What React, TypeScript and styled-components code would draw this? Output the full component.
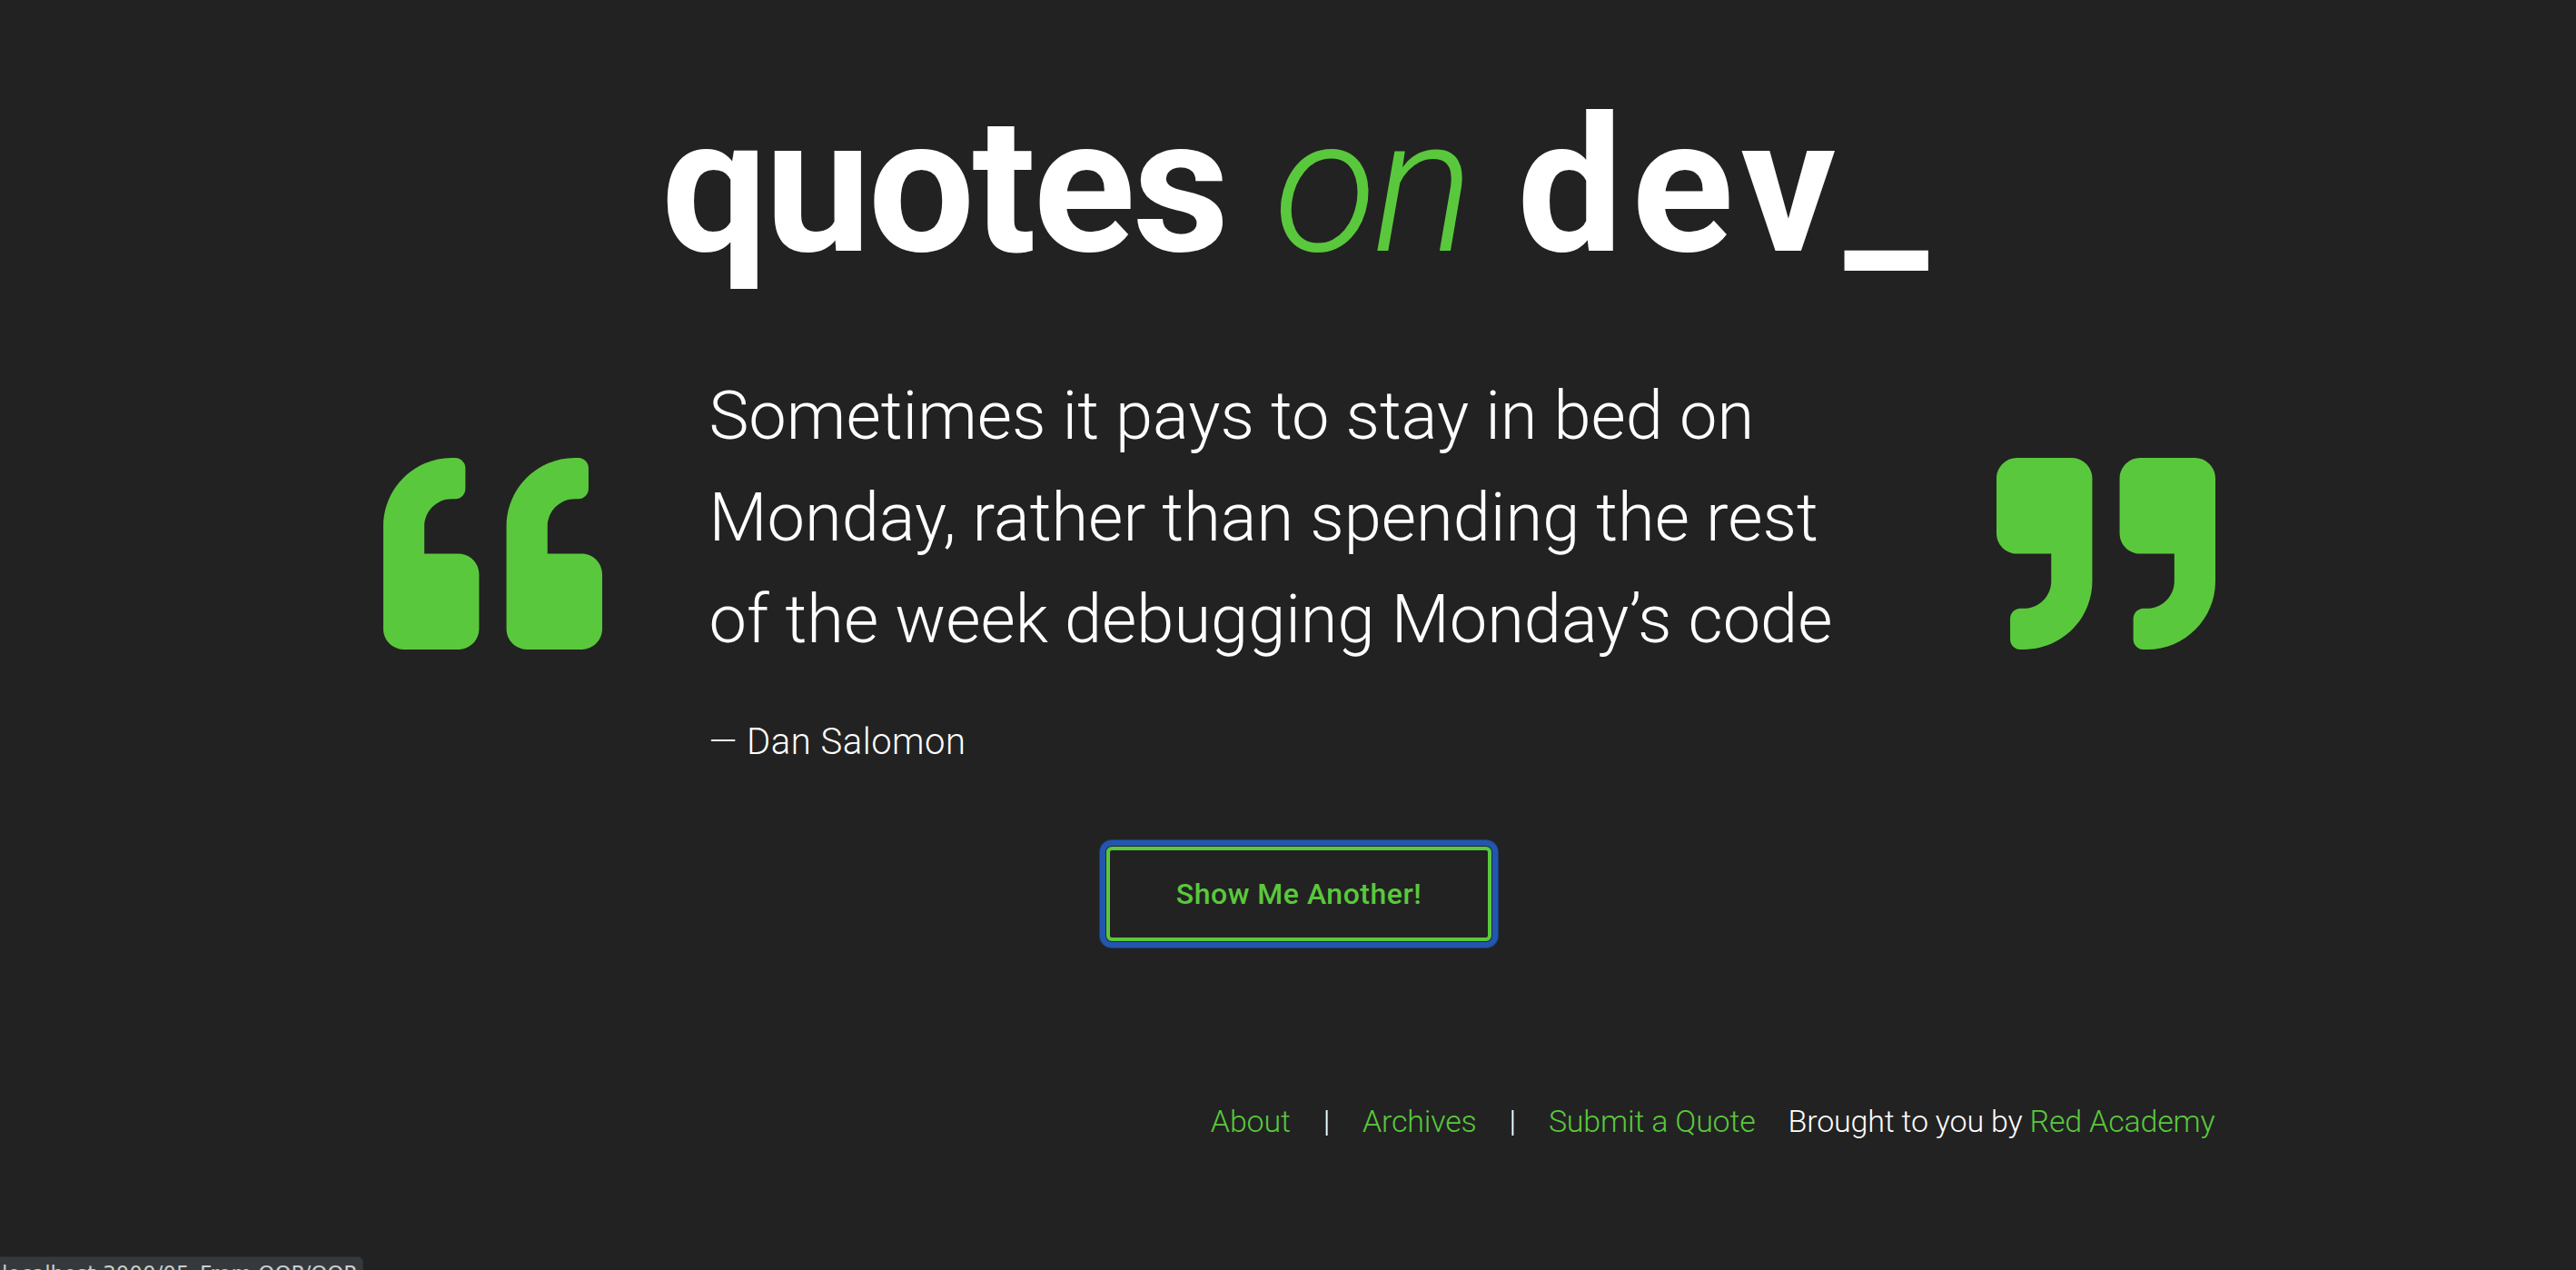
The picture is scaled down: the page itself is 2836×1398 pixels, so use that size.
import React from "react";
import styled, { createGlobalStyle } from "styled-components";

const GREEN = "#5ac83c";

const GlobalStyle = createGlobalStyle`
  html, body {
    margin: 0;
    padding: 0;
    background: #222222;
    height: 100%;
  }
  body {
    font-family: Roboto, "Noto Sans", sans-serif;
    color: #ffffff;
    overflow: hidden;
  }
  * { box-sizing: border-box; }
`;

const Page = styled.div`
  min-height: 100vh;
  padding: 101px 0 0 24px;
  display: flex;
  flex-direction: column;
  align-items: center;
`;

const Container = styled.main`
  width: 2017px;
  display: flex;
  flex-direction: column;
  align-items: center;
`;

const Logo = styled.h1`
  margin: 0;
  font-family: Roboto, sans-serif;
  font-size: 208px;
  line-height: 208px;
  font-weight: 700;
  color: #ffffff;
  white-space: nowrap;
`;

const LogoWord = styled.span<{ $spacing: number }>`
  letter-spacing: ${(p) => p.$spacing}px;
`;

const LogoOn = styled.span`
  font-weight: 300;
  font-style: italic;
  color: ${GREEN};
  letter-spacing: -4px;
`;

const QuoteRow = styled.section`
  align-self: stretch;
  display: flex;
  align-items: flex-start;
  margin-top: 93px;
`;

const QuoteIcon = styled.svg`
  flex: 0 0 241px;
  width: 241px;
  height: 241px;
  margin-top: 87px;
  fill: ${GREEN};
`;

const QuoteBody = styled.div`
  flex: 1 1 auto;
  padding-left: 118px;
`;

const QuoteText = styled.p`
  margin: 0;
  font-family: Roboto, sans-serif;
  font-weight: 300;
  font-size: 74px;
  line-height: 112px;
  letter-spacing: 0;
  color: #ffffff;
  white-space: nowrap;
`;

const Author = styled.p`
  margin: 51px 0 0;
  font-family: Roboto, sans-serif;
  font-weight: 300;
  font-size: 40px;
  line-height: 56px;
  letter-spacing: 0.5px;
  color: #ffffff;
`;

const AnotherButton = styled.button`
  margin-top: 87px;
  width: 424px;
  height: 104px;
  background: transparent;
  border: 4px solid ${GREEN};
  border-radius: 6px;
  color: ${GREEN};
  font-family: Roboto, sans-serif;
  font-weight: 500;
  font-size: 32px;
  letter-spacing: 0.5px;
  cursor: pointer;
  outline: none;
  box-shadow: 0 0 0 1px #1e2a3c, 0 0 0 7px #2356ae, 0 0 0 8px #1c3d74;
`;

const Footer = styled.footer`
  align-self: stretch;
  margin-top: 174px;
  display: flex;
  justify-content: flex-end;
  align-items: baseline;
  gap: 36px;
  font-family: Roboto, sans-serif;
  font-weight: 300;
  font-size: 34px;
  line-height: 48px;
  letter-spacing: -0.2px;
`;

const FooterLink = styled.a`
  color: ${GREEN};
  text-decoration: none;
`;

const Separator = styled.span`
  color: #ffffff;
`;

const Credit = styled.span`
  color: #ffffff;
  white-space: nowrap;
`;

const StatusBubble = styled.div`
  position: fixed;
  left: 0;
  bottom: 0;
  width: 400px;
  height: 15px;
  overflow: hidden;
  background: #35393c;
  border-top: 1px solid #2b2e30;
  border-right: 1px solid #2b2e30;
  border-top-right-radius: 6px;
  padding: 6px 0 0 2px;
  font-family: "DejaVu Sans", sans-serif;
  font-size: 23px;
  line-height: 24px;
  color: #c9cccf;
  white-space: nowrap;
`;

const QUOTE_LEFT =
  "M464 256h-80v-64c0-35.3 28.7-64 64-64h8c13.3 0 24-10.7 24-24V56c0-13.3-10.7-24-24-24h-8c-88.4 0-160 71.6-160 160v240c0 26.5 21.5 48 48 48h128c26.5 0 48-21.5 48-48V304c0-26.5-21.5-48-48-48zm-288 0H96v-64c0-35.3 28.7-64 64-64h8c13.3 0 24-10.7 24-24V56c0-13.3-10.7-24-24-24h-8C71.6 32 0 103.6 0 192v240c0 26.5 21.5 48 48 48h128c26.5 0 48-21.5 48-48V304c0-26.5-21.5-48-48-48z";
const QUOTE_RIGHT =
  "M464 32H336c-26.5 0-48 21.5-48 48v128c0 26.5 21.5 48 48 48h80v64c0 35.3-28.7 64-64 64h-8c-13.3 0-24 10.7-24 24v48c0 13.3 10.7 24 24 24h8c88.4 0 160-71.6 160-160V80c0-26.5-21.5-48-48-48zm-288 0H48C21.5 32 0 53.5 0 80v128c0 26.5 21.5 48 48 48h80v64c0 35.3-28.7 64-64 64h-8c-13.3 0-24 10.7-24 24v48c0 13.3 10.7 24 24 24h8c88.4 0 160-71.6 160-160V80c0-26.5-21.5-48-48-48z";

export default function App() {
  return (
    <>
      <GlobalStyle />
      <Page>
        <Container>
          <Logo>
            <LogoWord $spacing={-3}>quotes</LogoWord> <LogoOn>on</LogoOn>{" "}
            <LogoWord $spacing={9}>dev_</LogoWord>
          </Logo>
          <QuoteRow>
            <QuoteIcon viewBox="0 0 512 512" aria-hidden="true">
              <path d={QUOTE_LEFT} />
            </QuoteIcon>
            <QuoteBody>
              <QuoteText>
                Sometimes it pays to stay in bed on
                <br />
                Monday, rather than spending the rest
                <br />
                of the week debugging Monday’s code
              </QuoteText>
              <Author>— Dan Salomon</Author>
            </QuoteBody>
            <QuoteIcon viewBox="0 0 512 512" aria-hidden="true">
              <path d={QUOTE_RIGHT} />
            </QuoteIcon>
          </QuoteRow>
          <AnotherButton type="button">Show Me Another!</AnotherButton>
          <Footer>
            <FooterLink href="#">About</FooterLink>
            <Separator>|</Separator>
            <FooterLink href="#">Archives</FooterLink>
            <Separator>|</Separator>
            <FooterLink href="#">Submit a Quote</FooterLink>
            <Credit>
              Brought to you by <FooterLink href="#">Red Academy</FooterLink>
            </Credit>
          </Footer>
        </Container>
      </Page>
      <StatusBubble>localhost:3000/05_From OOP/OOP</StatusBubble>
    </>
  );
}
